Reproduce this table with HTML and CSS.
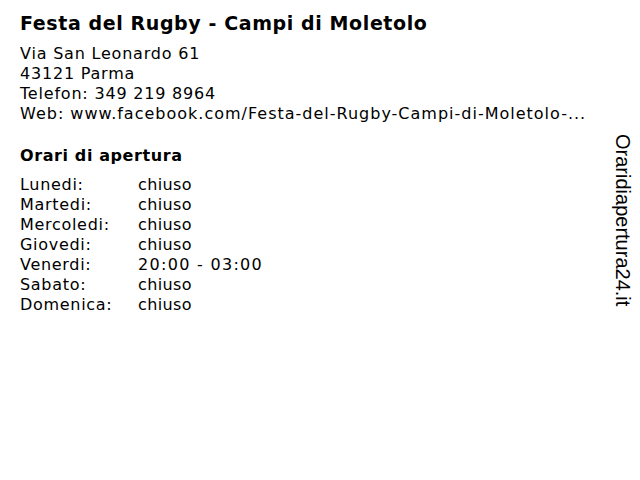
FILE: index.html
```html
<!DOCTYPE html>
<html lang="it">
<head>
<meta charset="utf-8">
<title>Festa del Rugby - Campi di Moletolo</title>
<link rel="stylesheet" href="styles.css">
</head>
<body>
<div class="page">
  <main class="content">
    <h1 class="title">Festa del Rugby - Campi di Moletolo</h1>
    <div class="address">
      <div>Via San Leonardo 61</div>
      <div>43121 Parma</div>
      <div>Telefon: 349 219 8964</div>
      <div class="web">Web: www.facebook.com/Festa-del-Rugby-Campi-di-Moletolo-...</div>
    </div>
    <h2 class="hours-title">Orari di apertura</h2>
    <div class="hours">
      <div class="row"><span class="day">Lunedi:</span><span class="time">chiuso</span></div>
      <div class="row"><span class="day">Martedi:</span><span class="time">chiuso</span></div>
      <div class="row"><span class="day">Mercoledi:</span><span class="time">chiuso</span></div>
      <div class="row"><span class="day">Giovedi:</span><span class="time">chiuso</span></div>
      <div class="row"><span class="day">Venerdi:</span><span class="time digits">20:00 - 03:00</span></div>
      <div class="row"><span class="day">Sabato:</span><span class="time">chiuso</span></div>
      <div class="row"><span class="day">Domenica:</span><span class="time">chiuso</span></div>
    </div>
  </main>
  <aside class="brand">Oraridiapertura24.it</aside>
</div>
</body>
</html>
```
FILE: styles.css
```css
html, body {
  margin: 0;
  padding: 0;
  background: #fff;
}
body {
  font-family: "DejaVu Sans", Verdana, sans-serif;
  color: #000;
  width: 640px;
  height: 480px;
  overflow: hidden;
}
.page {
  display: flex;
  flex-direction: row;
}
.content {
  flex: 1;
  padding: 11px 0 0 20px;
}
.title {
  margin: 0;
  font-size: 19px;
  font-weight: bold;
  line-height: 24px;
  letter-spacing: 0.6px;
}
.address {
  margin-top: 9px;
  font-size: 16px;
  line-height: 20px;
  letter-spacing: 0.8px;
}
.address .web {
  letter-spacing: 1px;
}
.hours-title {
  margin: 22px 0 0 0;
  font-size: 16px;
  font-weight: bold;
  line-height: 20px;
  letter-spacing: 0.6px;
}
.hours {
  margin-top: 9px;
  font-size: 16px;
  line-height: 20px;
  letter-spacing: 0.7px;
}
.row {
  display: flex;
}
.day {
  width: 118px;
}
.time {
  letter-spacing: 0.4px;
}
.time.digits {
  letter-spacing: 1.3px;
}
.brand {
  writing-mode: vertical-rl;
  font-family: "Liberation Sans", Arial, sans-serif;
  font-size: 20px;
  line-height: 20px;
  color: #000;
  padding-top: 134px;
  margin-right: 7px;
}
```
